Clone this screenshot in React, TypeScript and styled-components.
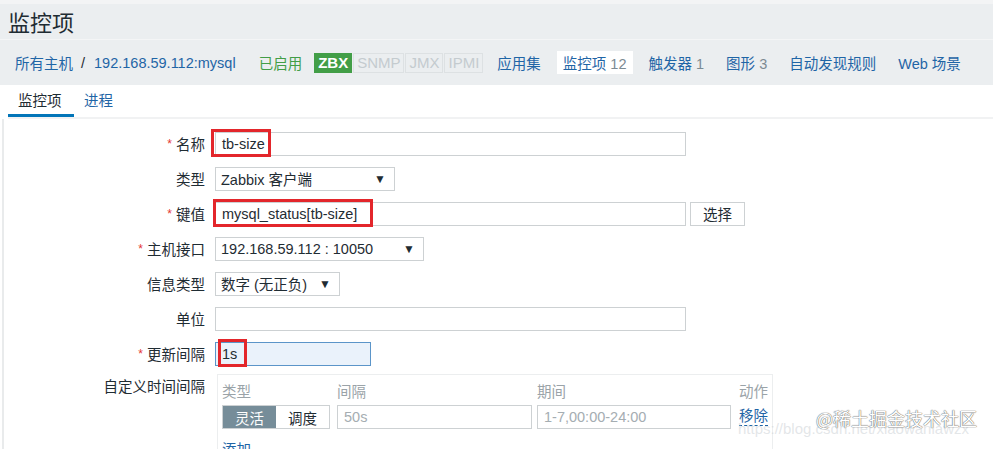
import React from 'react'
import styled, { createGlobalStyle } from 'styled-components'

const GlobalStyle = createGlobalStyle`
    html, body {
        margin: 0;
        padding: 0;
        background: #ffffff;
    }
    body {
        width: 993px;
        height: 449px;
        overflow: hidden;
        font-family: Arial, "Liberation Sans", "Noto Sans CJK SC", sans-serif;
        color: #1f2c33;
    }
`

const hostNav = [
    { label: '应用集' },
    { label: '监控项', count: '12', active: true },
    { label: '触发器', count: '1' },
    { label: '图形', count: '3' },
    { label: '自动发现规则' },
    { label: 'Web 场景' },
]

export default function App() {
    return (
        <Page>
            <GlobalStyle />
            <Header>
                <Title>监控项</Title>
                <Breadcrumbs>
                    <Crumb>所有主机</Crumb>
                    <Slash>/</Slash>
                    <Crumb>192.168.59.112:mysql</Crumb>
                    <Status>已启用</Status>
                    <Badges>
                        <Badge $on>ZBX</Badge>
                        <Badge>SNMP</Badge>
                        <Badge>JMX</Badge>
                        <Badge>IPMI</Badge>
                    </Badges>
                    <HostNav>
                        {hostNav.map(item => (
                            <NavItem key={item.label} $active={item.active}>
                                {item.label}
                                {item.count && <Count> {item.count}</Count>}
                            </NavItem>
                        ))}
                    </HostNav>
                </Breadcrumbs>
            </Header>

            <Tabs>
                <Tab $active>监控项</Tab>
                <Tab>进程</Tab>
            </Tabs>

            <FormPanel>
                <FormGrid>
                    <Label $required>名称</Label>
                    <Field>
                        <TextBox $width={471}>tb-size</TextBox>
                        <Highlight $left={-4} $width={60} />
                    </Field>

                    <Label>类型</Label>
                    <Field>
                        <Select $width={180}>
                            Zabbix 客户端
                            <Arrow>▼</Arrow>
                        </Select>
                    </Field>

                    <Label $required>键值</Label>
                    <Field>
                        <TextBox $width={471}>mysql_status[tb-size]</TextBox>
                        <Button>选择</Button>
                        <Highlight $left={-2} $width={160} />
                    </Field>

                    <Label $required>主机接口</Label>
                    <Field>
                        <Select $width={209}>
                            192.168.59.112 : 10050
                            <Arrow>▼</Arrow>
                        </Select>
                    </Field>

                    <Label>信息类型</Label>
                    <Field>
                        <Select $width={125}>
                            数字 (无正负)
                            <Arrow>▼</Arrow>
                        </Select>
                    </Field>

                    <Label>单位</Label>
                    <Field>
                        <TextBox $width={471} />
                    </Field>

                    <Label $required>更新间隔</Label>
                    <Field>
                        <TextBox $width={156} $focused>1s</TextBox>
                        <Highlight $left={3} $width={29} />
                    </Field>

                    <Label $top>自定义时间间隔</Label>
                    <IntervalTable>
                        <IntervalHead>
                            <span>类型</span>
                            <span>间隔</span>
                            <span>期间</span>
                            <ActionHead>动作</ActionHead>
                        </IntervalHead>
                        <IntervalRow>
                            <Segmented>
                                <Segment $selected>灵活</Segment>
                                <Segment>调度</Segment>
                            </Segmented>
                            <TextBox $width={195} $placeholder>50s</TextBox>
                            <TextBox $width={194} $placeholder>1-7,00:00-24:00</TextBox>
                            <LinkAction>移除</LinkAction>
                        </IntervalRow>
                        <AddLink>添加</AddLink>
                    </IntervalTable>
                </FormGrid>
            </FormPanel>

            <Watermark>
                <WatermarkUrl>https://blog.csdn.net/xiaowanlawzx</WatermarkUrl>
                <WatermarkBrand>@稀土掘金技术社区</WatermarkBrand>
            </Watermark>
        </Page>
    )
}

const Page = styled.div`
    position: relative;
    width: 993px;
    height: 449px;
    overflow: hidden;
    font-size: 14.5px;
`

const Header = styled.div`
    background: #ebeef0;
    border-top: 4px solid #f3f4f5;
`

const Title = styled.h1`
    margin: 0;
    height: 36px;
    padding: 0 0 1px 8px;
    box-sizing: border-box;
    display: flex;
    align-items: center;
    font-size: 22px;
    font-weight: normal;
    color: #1f2c33;
    border-bottom: 1px solid #f4f5f6;
`

const Breadcrumbs = styled.div`
    height: 45px;
    display: flex;
    align-items: center;
    padding-left: 15px;
    white-space: nowrap;
`

const Crumb = styled.span`
    color: #1f65a6;
`

const Slash = styled.span`
    color: #1f2c33;
    margin: 0 9px 0 8px;
`

const Status = styled.span`
    color: #429e47;
    margin-left: 23px;
`

const Badges = styled.div`
    display: flex;
    margin-left: 12px;
    gap: 1px;
`

const Badge = styled.span<{ $on?: boolean }>`
    padding: 0 3px;
    height: 18px;
    line-height: 18px;
    font-size: 15px;
    font-weight: ${({ $on }) => ($on ? 'bold' : 'normal')};
    color: ${({ $on }) => ($on ? '#ffffff' : '#c4cbcf')};
    background: ${({ $on }) => ($on ? '#429e47' : 'transparent')};
    border: 1px solid ${({ $on }) => ($on ? '#429e47' : '#dde1e3')};
`

const HostNav = styled.div`
    display: flex;
    align-items: center;
    margin-left: 8px;
    gap: 10px;
`

const NavItem = styled.span<{ $active?: boolean }>`
    color: #1f65a6;
    padding: 1px 6px;
    background: ${({ $active }) => ($active ? '#ffffff' : 'transparent')};
`

const Count = styled.span`
    color: #7c8a93;
`

const Tabs = styled.div`
    display: flex;
    height: 32px;
    margin-left: 8px;
    border-bottom: 2px solid #f1f2f3;
`

const Tab = styled.div<{ $active?: boolean }>`
    display: flex;
    align-items: center;
    padding: 0 10px;
    color: ${({ $active }) => ($active ? '#1f2c33' : '#1f65a6')};
    border-bottom: 3px solid ${({ $active }) => ($active ? '#0275b8' : 'transparent')};
    box-sizing: border-box;
    min-width: ${({ $active }) => ($active ? '66px' : 'auto')};
`

const FormPanel = styled.div`
    margin-left: 2px;
    border-left: 2px solid #e9ebec;
    padding-top: 7px;
    height: 400px;
`

const FormGrid = styled.div`
    display: grid;
    grid-template-columns: 201px 1fr;
    grid-auto-rows: 35px;
    column-gap: 10px;
    align-items: center;
`

const Label = styled.div<{ $required?: boolean; $top?: boolean }>`
    text-align: right;
    color: #1f2c33;
    align-self: ${({ $top }) => ($top ? 'start' : 'center')};
    padding-top: ${({ $top }) => ($top ? '4px' : '0')};
    white-space: nowrap;

    &::before {
        content: ${({ $required }) => ($required ? "'*'" : "''")};
        color: #e33734;
        font-size: 12px;
        margin-right: 4px;
        vertical-align: 2px;
    }
`

const Field = styled.div`
    position: relative;
    display: flex;
    align-items: center;
    gap: 4px;
`

const TextBox = styled.div<{ $width: number; $focused?: boolean; $placeholder?: boolean }>`
    box-sizing: border-box;
    width: ${({ $width }) => $width}px;
    height: 24px;
    line-height: 22px;
    padding: 0 6px;
    white-space: nowrap;
    border: 1px solid ${({ $focused }) => ($focused ? '#5b95c9' : '#cdd1d3')};
    background: ${({ $focused }) => ($focused ? '#eaf2fb' : '#ffffff')};
    color: ${({ $placeholder }) => ($placeholder ? '#a5adb2' : '#1f2c33')};
`

const Select = styled.div<{ $width: number }>`
    box-sizing: border-box;
    width: ${({ $width }) => $width}px;
    height: 24px;
    padding: 0 8px 0 5px;
    display: flex;
    align-items: center;
    justify-content: space-between;
    white-space: nowrap;
    border: 1px solid #cdd1d3;
    background: #ffffff;
`

const Arrow = styled.span`
    font-size: 12px;
    color: #1f2c33;
`

const Button = styled.div`
    box-sizing: border-box;
    width: 55px;
    height: 24px;
    display: flex;
    align-items: center;
    justify-content: center;
    border: 1px solid #cdd1d3;
    background: #ffffff;
    color: #1f2c33;
`

const Highlight = styled.div<{ $left: number; $width: number }>`
    position: absolute;
    left: ${({ $left }) => $left}px;
    top: -3px;
    width: ${({ $width }) => $width}px;
    height: 28px;
    box-sizing: border-box;
    border: 3px solid #e3262b;
    pointer-events: none;
`

const IntervalTable = styled.div`
    grid-row: span 2;
    align-self: start;
    margin-top: 3px;
    margin-left: 2px;
    width: 556px;
    height: 80px;
    box-sizing: border-box;
    border: 1px solid #eceeef;
    border-bottom: none;
    padding: 4px 4px 0;
`

const columns = `
    display: grid;
    grid-template-columns: 115px 200px 201px 1fr;
    align-items: center;
`

const IntervalHead = styled.div`
    ${columns}
    color: #9aa3a8;
    height: 22px;
    white-space: nowrap;
`

const ActionHead = styled.span`
    justify-self: end;
`

const IntervalRow = styled.div`
    ${columns}
    margin-top: 4px;
    height: 24px;
`

const Segmented = styled.div`
    display: flex;
    width: 108px;
    height: 24px;
    box-sizing: border-box;
    border: 1px solid #cdd1d3;
`

const Segment = styled.div<{ $selected?: boolean }>`
    flex: 1;
    display: flex;
    align-items: center;
    justify-content: center;
    background: ${({ $selected }) => ($selected ? '#768d99' : '#ffffff')};
    color: ${({ $selected }) => ($selected ? '#ffffff' : '#1f2c33')};
`

const LinkAction = styled.span`
    justify-self: end;
    white-space: nowrap;
    color: #1f65a6;
    border-bottom: 1px dashed #1f65a6;
    line-height: 17px;
`

const AddLink = styled.div`
    margin-top: 9px;
    color: #1f65a6;
`

const Watermark = styled.div`
    position: absolute;
    left: 738px;
    top: 404px;
    width: 255px;
    height: 40px;
    pointer-events: none;
`

const WatermarkUrl = styled.div`
    position: absolute;
    left: 0;
    top: 16px;
    font-size: 15px;
    color: rgba(200, 205, 210, 0.5);
    white-space: nowrap;
`

const WatermarkBrand = styled.div`
    position: absolute;
    left: 78px;
    top: 1px;
    font-size: 18px;
    color: #ffffff;
    text-shadow: 0 0 1px #5b5b5b, 0 0 1px #5b5b5b;
    white-space: nowrap;
    font-family: "Noto Sans CJK SC", sans-serif;
`
